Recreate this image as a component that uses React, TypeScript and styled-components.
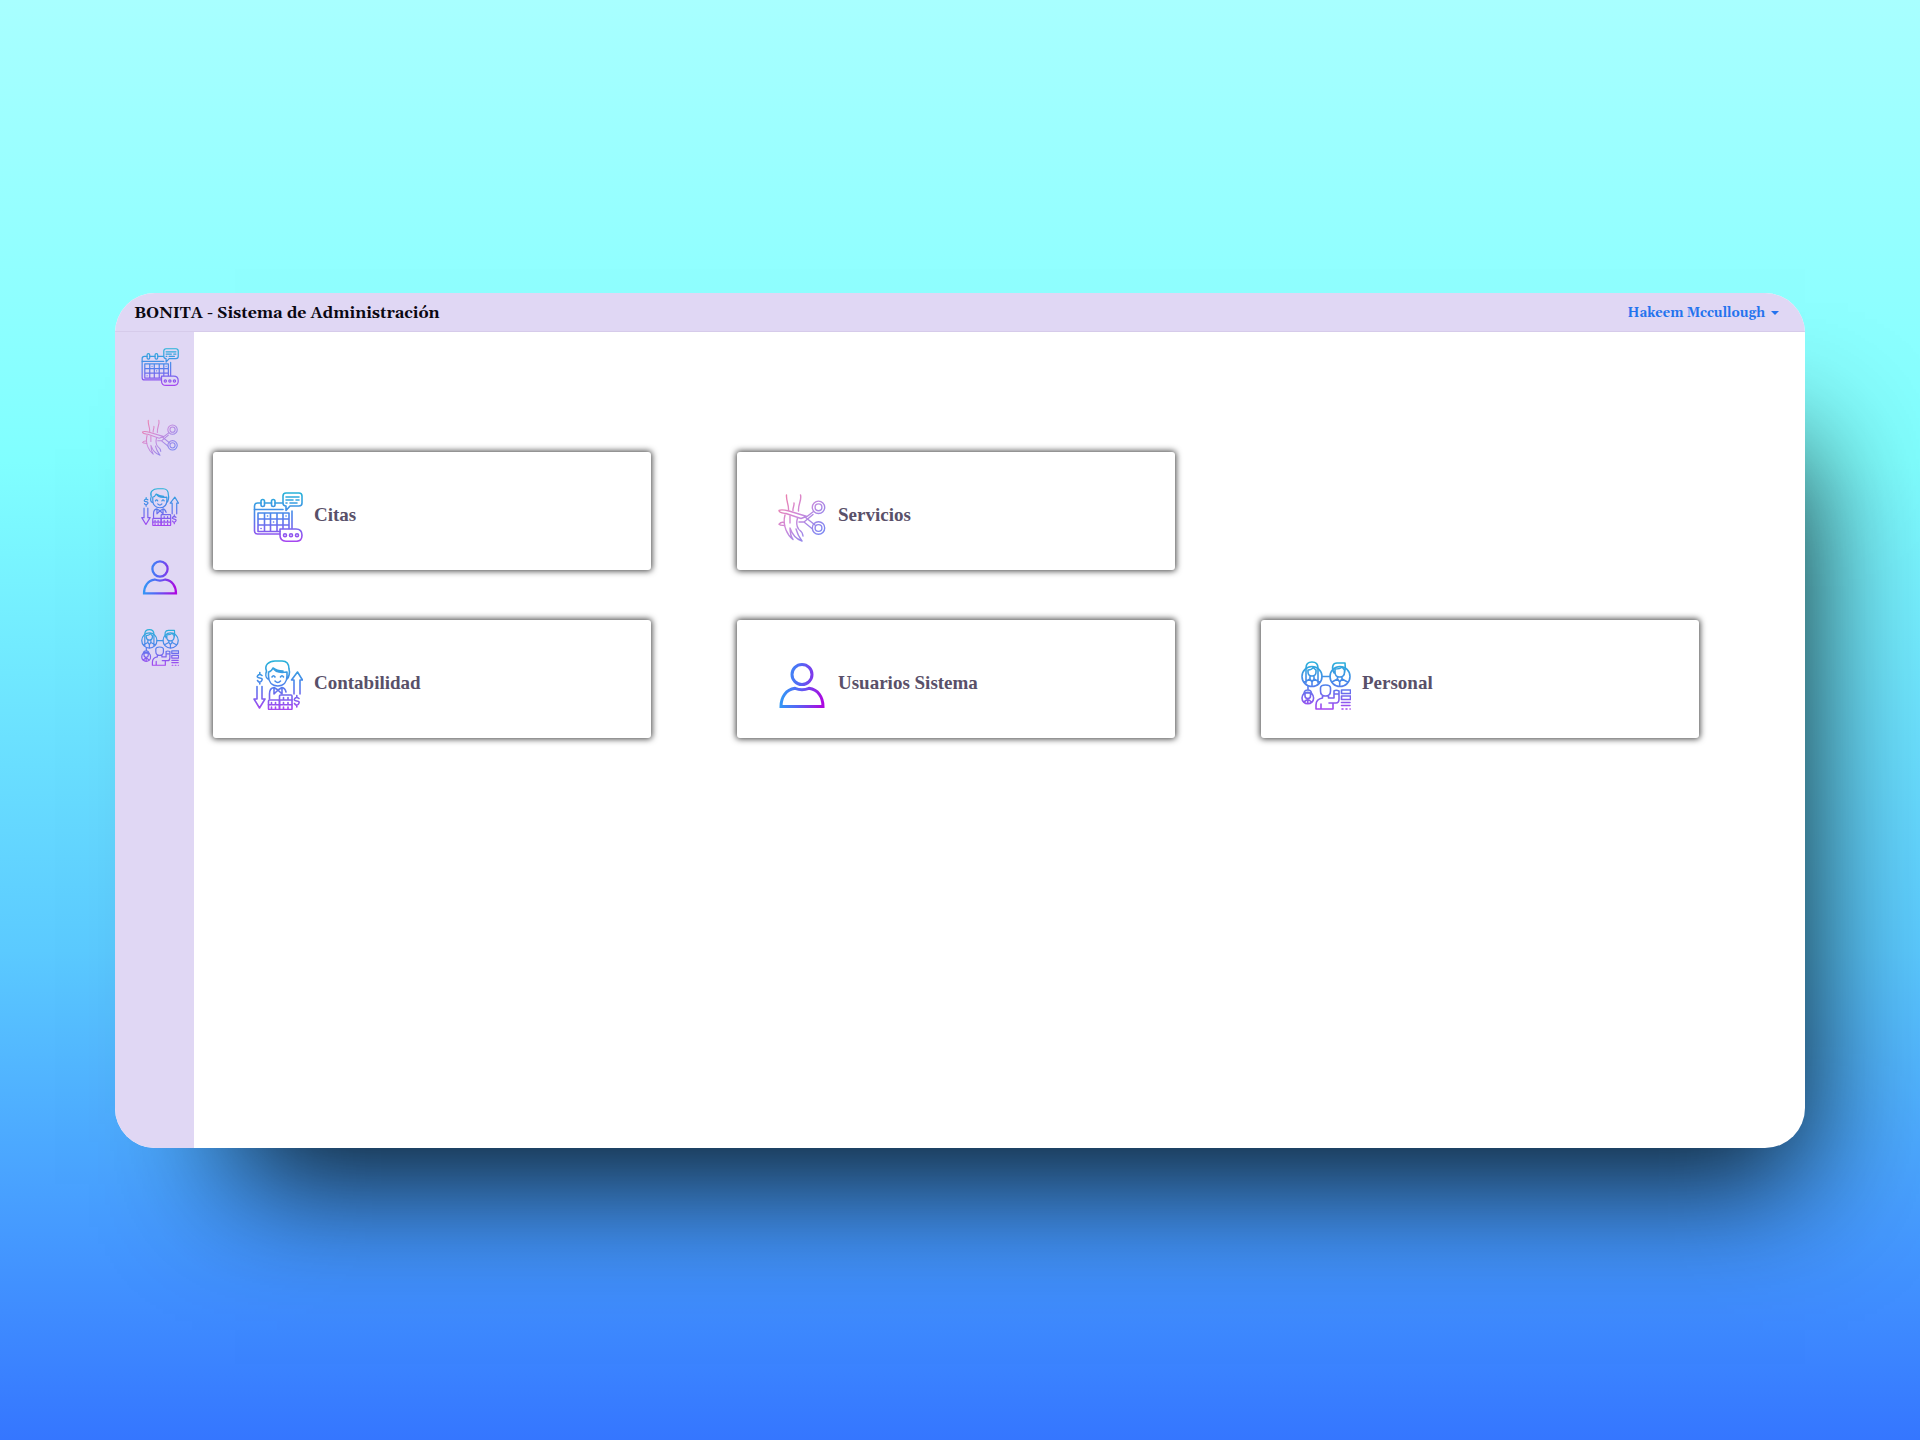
import React, { useId } from "react";
import styled, { createGlobalStyle } from "styled-components";

const GlobalStyle = createGlobalStyle`
  * { box-sizing: border-box; }
  body { margin: 0; font-family: "Liberation Serif", serif; }
`;

const Backdrop = styled.div`
  min-height: 100vh;
  padding: 40px 115px;
  display: flex;
  align-items: center;
  background: linear-gradient(180deg, #a8ffff 0%, #80ffff 32%, #5bcaff 66%, #48a0ff 83%, #3576ff 100%);
`;

const Window = styled.div`
  flex: 1;
  min-height: 855px;
  display: flex;
  flex-direction: column;
  overflow: hidden;
  border-radius: 40px;
  background: #fff;
  box-shadow: 60px 96px 120px -60px rgba(0, 0, 0, 0.85);
`;

const Header = styled.header`
  height: 39px;
  padding: 3px 26px 0 19px;
  display: flex;
  align-items: center;
  justify-content: space-between;
  background: #e0d7f4;
  border-bottom: 1px solid #d6cbea;
`;

const Title = styled.h1`
  margin: 0;
  font: bold 16px/24px Georgia, Gelasio, "Liberation Serif", serif;
  color: #0b0812;
`;

const UserButton = styled.button`
  display: flex;
  align-items: center;
  gap: 6px;
  padding: 0;
  border: 0;
  background: none;
  font: bold 13px/24px Georgia, Gelasio, "Liberation Serif", serif;
  color: #2473ee;
`;

const Caret = styled.span`
  border: 4px solid transparent;
  border-top-color: currentColor;
  border-bottom: 0;
`;

const Body = styled.div`
  flex: 1;
  display: flex;
`;

const Sidebar = styled.nav`
  width: 79px;
  padding: 16px 0 0 26px;
  display: flex;
  flex-direction: column;
  align-items: flex-start;
  gap: 32px;
  background: #e0d7f4;
`;

const SideLink = styled.a`
  display: block;
  height: 38px;
`;

const Main = styled.main`
  flex: 1;
  padding: 120px 106px 40px 19px;
  display: grid;
  grid-template-columns: repeat(3, 1fr);
  grid-auto-rows: 118px;
  align-content: start;
  gap: 50px 86px;
`;

const Card = styled.a<{ $newRow?: boolean }>`
  ${(p) => p.$newRow && "grid-column-start: 1;"}
  padding: 40px;
  display: flex;
  gap: 11px;
  border-radius: 3px;
  background: #fff;
  box-shadow: 0 0 6px 1px rgba(0, 0, 0, 0.75);
  color: #595069;
  text-decoration: none;
`;

const CardLabel = styled.span`
  font-size: 19px;
  font-weight: bold;
  line-height: 46px;
`;

const Glyph = styled.svg<{ $size: number }>`
  display: block;
  flex: none;
  width: ${(p) => p.$size}px;
  height: ${(p) => p.$size}px;
  fill: none;
  stroke-linecap: round;
  stroke-linejoin: round;
`;

type Kind = "calendar" | "hair" | "accounting" | "user" | "staff";

const gradients: Record<Kind, { stops: string[]; x2: number; y2: number; width: number }> = {
  calendar: { stops: ["#25b4d8", "#4f82ec", "#a845f0"], x2: 0, y2: 50, width: 1.6 },
  hair: { stops: ["#f57c9c", "#d08ada", "#7d86f2"], x2: 45, y2: 40, width: 1.4 },
  accounting: { stops: ["#25b4d8", "#4f82ec", "#a845f0"], x2: 0, y2: 50, width: 1.6 },
  user: { stops: ["#22b0f6", "#5565f5", "#ac08e0"], x2: 50, y2: 6, width: 3 },
  staff: { stops: ["#25b4d8", "#4f82ec", "#a845f0"], x2: 0, y2: 50, width: 1.6 },
};

const drawings: Record<Kind, React.ReactNode> = {
  calendar: (
    <>
      <path d="M8 11H4.5Q1.5 11 1.5 14V39Q1.5 42 4.5 42H27M11.5 11H18.5M22 11H29.5M39 19V36.5" />
      <rect x="8" y="7.5" width="3.5" height="7" rx="1.7" />
      <rect x="18.5" y="7.5" width="3.5" height="7" rx="1.7" />
      <path d="M1.5 17.5H30" />
      <path d="M27 39.5H5V21H36V36.5M5 27H36M5 33H36M11.5 21V39.5M17.5 21V39.5M24 21V39.5M30 21V36.5" />
      <path d="M14.5 24h.1M33 24h.1M20.5 30h.1M8 36.5h.1" />
      <path d="M33 1H46Q49 1 49 4V11Q49 14 46 14H37L33 18.5V14Q30 14 30 11V4Q30 1 33 1Z" />
      <path d="M33 5H46M33 8H40M43 8H46M33 11H34M37 11H44" />
      <path d="M27 37H43Q49 37 49 43.3T43 49.2H33Q27 49.2 27 43.3Z" />
      <circle cx="32" cy="43.3" r="1.5" />
      <circle cx="38" cy="43.3" r="1.5" />
      <circle cx="44" cy="43.3" r="1.5" />
    </>
  ),
  hair: (
    <>
      <path d="M9.5 3C9 9 12 13 11.5 18M23.5 3C25 8 21 12 21.5 19M17 11C17.5 14 15.5 16 16 18.5" />
      <path d="M2 18.5C4 17 8 18 12 19L30 24.5L36.5 19.5M2 18.5C2 21 5 21 9 21.5L24 26.5L28 25M28 25L38 33" />
      <path d="M7 30.5C5 30 3 31 2 32.2C4 34 6 33 7.5 33.5M22 30H27L36 22.5M27 30L35.5 37" />
      <path d="M8 23C6.5 28 7 33 9 38S14 46 16 47.5C13 43 13 40 13 36C15 42 19 47 25 49C22 45 20 41 19 37M13 24V31M20.5 26C19 31 19.5 34 21.5 37M22.5 38Q25.5 40 26 44" />
      <circle cx="41.5" cy="15.3" r="6.2" />
      <circle cx="41.5" cy="15.3" r="3.4" />
      <circle cx="41.5" cy="36" r="6.2" />
      <circle cx="41.5" cy="36" r="3.4" />
    </>
  ),
  accounting: (
    <>
      <path d="M15 19C12.5 18 12.5 14 13.5 11C11 5 16 1 22 1H29Q36 1 36 9C37 12 36 18 34 19M15.5 12V16C15.5 22 19 26 24.8 26S34 22 34 16V12C28 13 22 12 20 8C19 10 17 12 15.5 12ZM20 8Q24 11 30 11" />
      <path d="M19 17Q20.5 14.5 22 17M27.5 17Q29 14.5 30.5 17M22 21Q24.8 24 27.5 21" />
      <path d="M16.5 39V34Q16.5 28 21 27.5L25 30L29 27.5Q32 28 33 32M21 28V34L25 30L29 34V28" />
      <path d="M9 15.5Q6.5 13.5 4.8 15.5T6.8 18T8.5 21T4.5 20.5M6.8 12.5V14M6.8 22V24" />
      <path d="M46 38.5Q43.5 36.5 41.8 38.5T43.8 41T45.5 44T41.5 43.5M43.8 35.5V37M43.8 45V47" />
      <path d="M4 26.5V39H1L6.5 48L12 39H9V26.5M41 34V20H38.5L44.5 12L49.5 20H47V34" />
      <rect x="15.5" y="40" width="11" height="9.5" rx="1" />
      <rect x="26.5" y="35" width="12.5" height="14.5" rx="1" />
      <path d="M15.5 44.8H39M26.5 40H39M18.5 42.5V44M22.5 42.5V44M18.5 47V49M22.5 47V49M30.5 37.5V39M35 37.5V39M30.5 42.5V44M35 42.5V44M30.5 47V49M35 47V49" />
    </>
  ),
  user: (
    <>
      <circle cx="25" cy="14.5" r="10" />
      <path d="M4 46.5C4 37 9 29.5 18 28.3Q25 31 32 28.3C41 29.5 46 37 46 46.5Z" strokeLinejoin="miter" />
    </>
  ),
  staff: (
    <>
      <circle cx="11" cy="16.5" r="10" />
      <circle cx="39" cy="16.5" r="10" />
      <path d="M21 16.5H29M5 23V8Q5 2 11 2T17 8V23M7 10Q11 10 12.5 7Q13 9 15 10V12Q15 16 11 16T7 12ZM9 16V19L11 22L13 19V16M3.5 22L9 19M18.5 22L13 19M11 22V26" />
      <path d="M33 13C30 7 32 3 36 3H44Q45 9 43.5 13M34 9Q39 9 41 7L43.5 10V12Q43.5 17 38.7 17T34 12ZM36.5 17V19L38.7 22L41 19V17M31 22L36.5 19M46.5 22L41 19M38.7 22V26" />
      <path d="M7 26V30M3 34Q3 30 6.8 30T10.5 34" />
      <circle cx="6.8" cy="38" r="5.8" />
      <path d="M4 33H9.5V36Q9.5 38.5 6.8 38.5T4 36ZM3 42L6.8 39L10.5 42M6.8 40V43" />
      <path d="M19.5 30V28Q19.5 25 24.5 25T29.5 28V31Q29.5 36 24.5 36T19.5 31ZM21.5 36V38Q15 39 15 45V49H32V43H35Q38 43 38 39V31Q35 29.5 33 31V38H27.5V36M20 44V49M33 34H38M32 43H28" />
      <rect x="40.5" y="30" width="9" height="3.5" />
      <rect x="40.5" y="36" width="9" height="3.5" />
      <path d="M40.5 42.5H49M40.5 45.5H49M41 49H42M45 49H46M49 49H49.2" />
    </>
  ),
};

function Icon({ kind, size }: { kind: Kind; size: number }) {
  const id = useId();
  const g = gradients[kind];
  return (
    <Glyph $size={size} viewBox="0 0 50 50" stroke={`url(#${id})`} strokeWidth={g.width} aria-hidden="true">
      <defs>
        <linearGradient id={id} gradientUnits="userSpaceOnUse" x1="0" y1="0" x2={g.x2} y2={g.y2}>
          {g.stops.map((color, i) => (
            <stop key={color} offset={i / 2} stopColor={color} />
          ))}
        </linearGradient>
      </defs>
      {drawings[kind]}
    </Glyph>
  );
}

const sections: { kind: Kind; label: string; newRow?: boolean }[] = [
  { kind: "calendar", label: "Citas" },
  { kind: "hair", label: "Servicios" },
  { kind: "accounting", label: "Contabilidad", newRow: true },
  { kind: "user", label: "Usuarios Sistema" },
  { kind: "staff", label: "Personal" },
];

export default function App() {
  return (
    <>
      <GlobalStyle />
      <Backdrop>
        <Window>
          <Header>
            <Title>BONITA - Sistema de Administración</Title>
            <UserButton type="button">
              Hakeem Mccullough
              <Caret />
            </UserButton>
          </Header>
          <Body>
            <Sidebar>
              {sections.map((s) => (
                <SideLink key={s.kind} href="#" aria-label={s.label}>
                  <Icon kind={s.kind} size={38} />
                </SideLink>
              ))}
            </Sidebar>
            <Main>
              {sections.map((s) => (
                <Card key={s.kind} href="#" $newRow={s.newRow}>
                  <Icon kind={s.kind} size={50} />
                  <CardLabel>{s.label}</CardLabel>
                </Card>
              ))}
            </Main>
          </Body>
        </Window>
      </Backdrop>
    </>
  );
}
